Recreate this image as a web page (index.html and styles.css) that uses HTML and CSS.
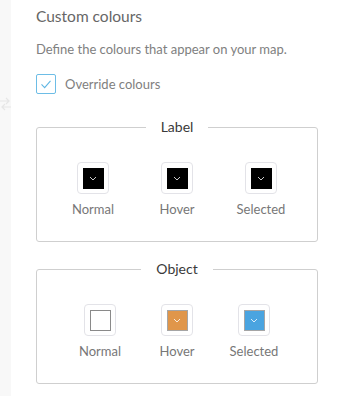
FILE: index.html
```html
<!DOCTYPE html>
<html>
<head>
<meta charset="utf-8">
<link rel="stylesheet" href="styles.css">
</head>
<body>
<div class="page">
  <aside class="rail">
    <svg class="rail-icon" width="11" height="14" viewBox="0 0 11 14"><path d="M0 4h9M6 1l3 3-3 3M11 10H2M5 7l-3 3 3 3" fill="none" stroke="#e6e6e6" stroke-width="1.2"/></svg>
  </aside>
  <main class="panel">
    <h2 class="title">Custom colours</h2>
    <p class="desc">Define the colours that appear on your map.</p>
    <label class="check-row">
      <span class="checkbox"><svg width="20" height="20" viewBox="0 0 20 20"><path d="M5 10.5l3.5 3.5L15 6.5" fill="none" stroke="#5fb6e3" stroke-width="1.2"/></svg></span>
      <span class="check-text">Override colours</span>
    </label>

    <fieldset class="group group-label">
      <legend class="legend">Label</legend>
      <div class="swatches">
        <div class="item"><span class="swatch"><span class="fill fill-black"><svg class="chev" width="8" height="5" viewBox="0 0 8 5"><path d="M1 1l3 3 3-3" fill="none" stroke="#fff" stroke-width="0.8"/></svg></span></span><span class="name">Normal</span></div>
        <div class="item"><span class="swatch"><span class="fill fill-black"><svg class="chev" width="8" height="5" viewBox="0 0 8 5"><path d="M1 1l3 3 3-3" fill="none" stroke="#fff" stroke-width="0.8"/></svg></span></span><span class="name">Hover</span></div>
        <div class="item"><span class="swatch"><span class="fill fill-black"><svg class="chev" width="8" height="5" viewBox="0 0 8 5"><path d="M1 1l3 3 3-3" fill="none" stroke="#fff" stroke-width="0.8"/></svg></span></span><span class="name">Selected</span></div>
      </div>
    </fieldset>

    <fieldset class="group group-object">
      <legend class="legend">Object</legend>
      <div class="swatches">
        <div class="item"><span class="swatch"><span class="fill fill-white"></span></span><span class="name">Normal</span></div>
        <div class="item"><span class="swatch"><span class="fill fill-orange"><svg class="chev" width="8" height="5" viewBox="0 0 8 5"><path d="M1 1l3 3 3-3" fill="none" stroke="#fff" stroke-width="0.8"/></svg></span></span><span class="name">Hover</span></div>
        <div class="item"><span class="swatch"><span class="fill fill-blue"><svg class="chev" width="8" height="5" viewBox="0 0 8 5"><path d="M1 1l3 3 3-3" fill="none" stroke="#fff" stroke-width="0.8"/></svg></span></span><span class="name">Selected</span></div>
      </div>
    </fieldset>
  </main>
</div>
</body>
</html>
```
FILE: styles.css
```css
html, body {
  margin: 0;
  padding: 0;
  background: #fff;
}
body {
  font-family: "Lato", "Noto Sans", sans-serif;
  color: #707070;
}
.page {
  display: flex;
  width: 344px;
  height: 396px;
  overflow: hidden;
}
.rail {
  width: 11px;
  flex: none;
  background: #f8f8f8;
  display: flex;
  flex-direction: column;
  padding-top: 97px;
  box-sizing: border-box;
}
.rail-icon {
  display: block;
}
.panel {
  flex: 1;
  padding: 6px 26px 0 25px;
  display: flex;
  flex-direction: column;
}
.title {
  margin: 0;
  font-size: 15.5px;
  line-height: 20px;
  font-weight: 400;
  color: #666;
}
.desc {
  margin: 14px 0 0;
  font-size: 13px;
  line-height: 18px;
  color: #808080;
}
.check-row {
  margin-top: 16px;
  display: flex;
  align-items: center;
  gap: 9px;
  height: 20px;
}
.checkbox {
  width: 20px;
  height: 20px;
  box-sizing: border-box;
  border: 1px solid #6dbde6;
  border-radius: 2px;
  display: flex;
  align-items: center;
  justify-content: center;
}
.checkbox svg {
  display: block;
}
.check-text {
  font-size: 13px;
  line-height: 18px;
  color: #808080;
}
.group {
  margin: 24px 0 0;
  padding: 26px 0 24px;
  border: 1px solid #cfcfcf;
  border-radius: 3px;
  min-width: 0;
}
.group-object {
  margin-top: 18px;
}
.legend {
  margin: 0 auto;
  padding: 0 15px;
  font-size: 14px;
  line-height: 18px;
  color: #3a3a3a;
}
.swatches {
  display: flex;
  justify-content: center;
}
.item {
  width: 84px;
  display: flex;
  flex-direction: column;
  align-items: center;
}
.group-object .item {
  width: 77px;
}
.swatch {
  width: 32px;
  height: 32px;
  box-sizing: border-box;
  border: 1px solid #e3e3e8;
  border-radius: 4px;
  display: flex;
  align-items: center;
  justify-content: center;
}
.fill {
  width: 21px;
  height: 21px;
  box-sizing: border-box;
  display: flex;
  align-items: center;
  justify-content: center;
}
.fill-black {
  background: #000;
}
.fill-white {
  background: #fff;
  border: 1px solid #8a8a8a;
}
.fill-orange {
  background: #e0964a;
  border: 1px solid #a5a5a5;
}
.fill-blue {
  background: #4aa4e0;
  border: 1px solid #a5a5a5;
}
.chev {
  display: block;
}
.name {
  margin-top: 7px;
  font-size: 13px;
  line-height: 16px;
  color: #777;
}
```
